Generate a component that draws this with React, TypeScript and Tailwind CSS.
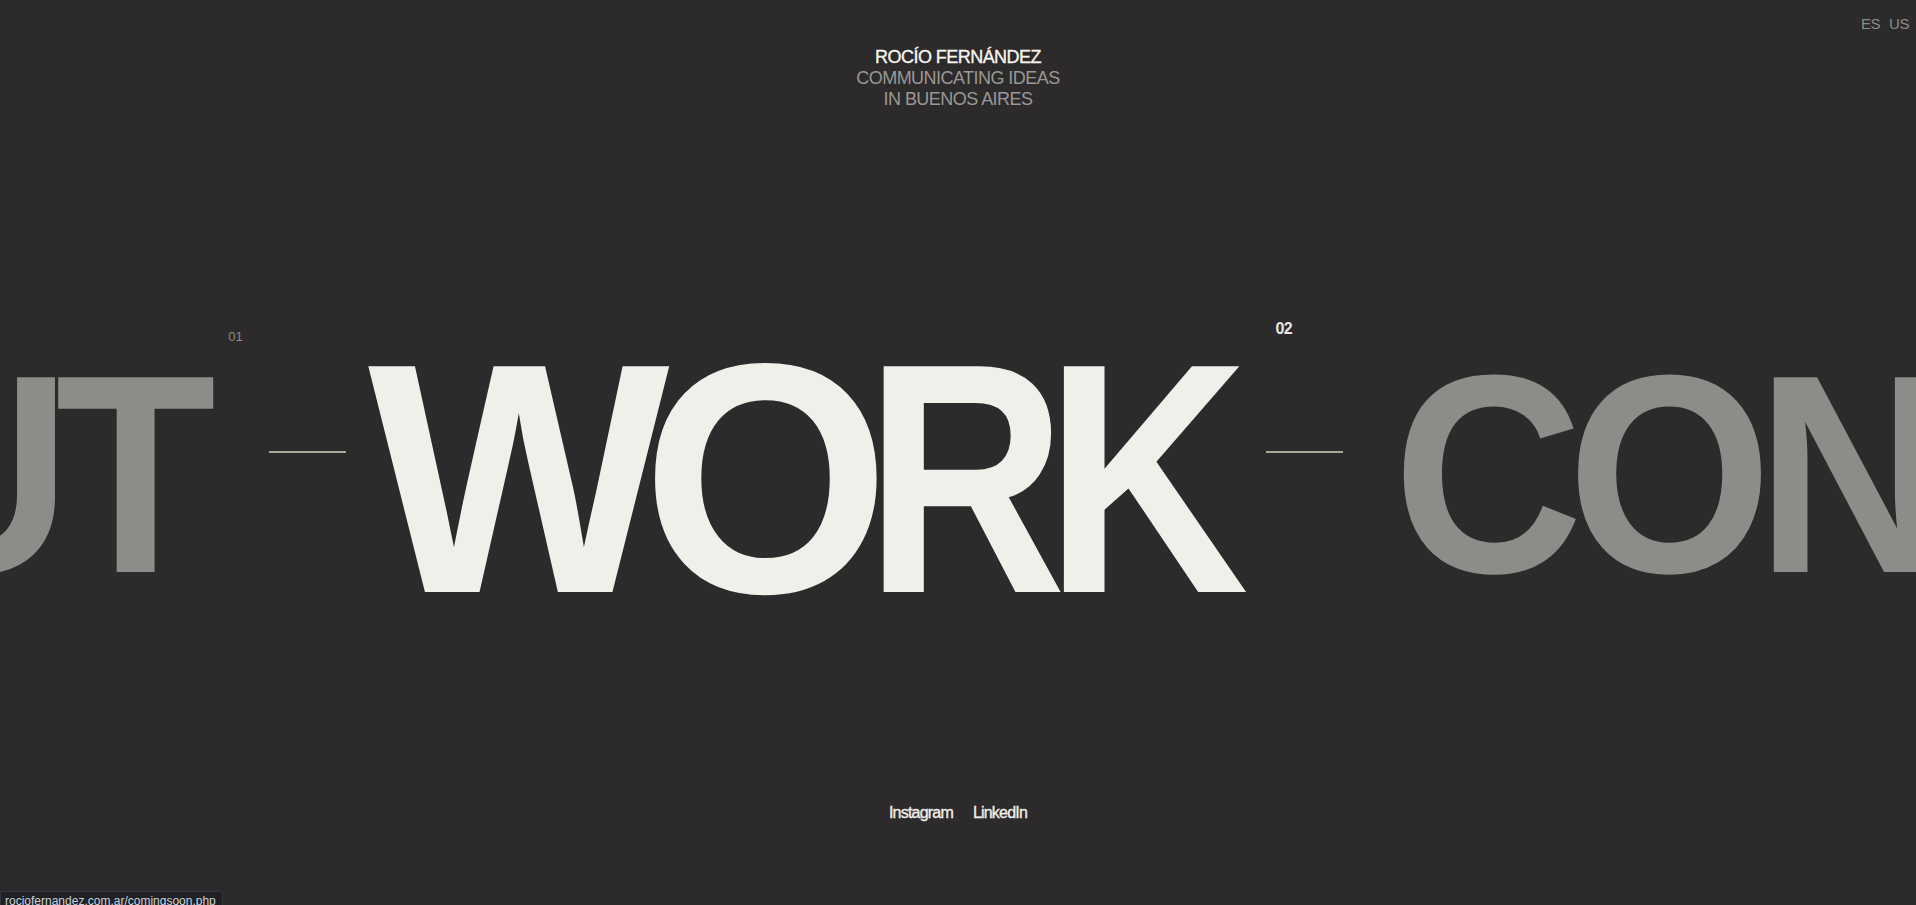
import React from 'react';

const big = "font-['Liberation_Sans',Arial,sans-serif] font-bold leading-none whitespace-nowrap";

const App = () => {
  return (
    <div className="relative w-full h-[905px] overflow-hidden bg-[#2c2a2b] font-['Liberation_Sans',Arial,sans-serif]">
      {/* Top area */}
      <div className="h-[320px] flex flex-col">
        <div className="flex justify-end gap-[9px] pt-[16px] pr-[7px] text-[15px] leading-none text-[#8d8c88] tracking-[-0.03em]">
          <a href="#">ES</a>
          <a href="#">US</a>
        </div>
        <div className="mt-[16px] flex flex-col items-center text-[18px] leading-[21px] tracking-[-0.03em] uppercase">
          <span className="text-[#f6f4ee] [-webkit-text-stroke:0.35px_#f6f4ee]">Rocío Fernández</span>
          <span className="text-[#9a9894]">Communicating ideas</span>
          <span className="text-[#9a9894]">in Buenos Aires</span>
        </div>
      </div>

      {/* Carousel */}
      <div className="h-[322px] flex items-center ml-[-721px]">
        <div className="relative shrink-0 mb-[14px]">
          <span className={`${big} inline-block origin-right scale-x-[0.93] text-[283px] tracking-[-0.06em] text-[#8d8c88]`}>ABOUT</span>
          <span className="absolute left-full top-[-3px] ml-[28px] text-[13px] leading-none text-[#8d8c88]">01</span>
        </div>
        <div className="shrink-0 ml-[69px] mr-[22px] mb-[58px] w-[77px] h-[2px] bg-[#a9a99b]" />
        <div className="relative shrink-0 mb-[4px]">
          <span className={`${big} flex text-[328px] tracking-[-0.1em] text-[#f1efe9]`}>
            <span className="inline-block origin-left scale-x-[0.974] mr-[-3px]">W</span>
            <span className="inline-block origin-left scale-x-[0.972] mr-[1px]">O</span>
            <span className="inline-block origin-left scale-x-[0.85] mr-[-24px]">R</span>
            <span className="inline-block origin-left scale-x-[0.86]">K</span>
          </span>
          <span className="absolute left-full top-[6px] ml-[26px] text-[16px] font-bold leading-none tracking-[-0.04em] text-[#e9e7e1]">02</span>
        </div>
        <div className="shrink-0 ml-[16px] mr-[50px] mb-[58px] w-[77px] h-[2px] bg-[#a9a99b]" />
        <div className="relative shrink-0 mb-[14px]">
          <span className={`${big} inline-block origin-left scale-x-[0.93] text-[283px] tracking-[-0.06em] text-[#8d8c88]`}>CONTACT</span>
          <span className="absolute left-full top-[-3px] ml-[31px] text-[13px] leading-none text-[#8d8c88]">03</span>
        </div>
      </div>

      {/* Footer links */}
      <div className="mt-[163px] flex justify-center gap-[20px] text-[16px] leading-none tracking-[-0.05em] text-[#f1efe9] [-webkit-text-stroke:0.35px_#f1efe9]">
        <a href="#">Instagram</a>
        <a href="#">LinkedIn</a>
      </div>

      {/* Browser status bubble */}
      <div className="absolute left-0 top-[891px] h-[20px] pl-[4px] pr-[6px] pt-[3px] bg-[#202124] border border-[#35363a] rounded-tr-[4px] text-[12px] leading-none text-[#c9d1df] font-['Liberation_Sans',Arial,sans-serif]">
        rociofernandez.com.ar/comingsoon.php
      </div>
    </div>
  );
};

export default App;
